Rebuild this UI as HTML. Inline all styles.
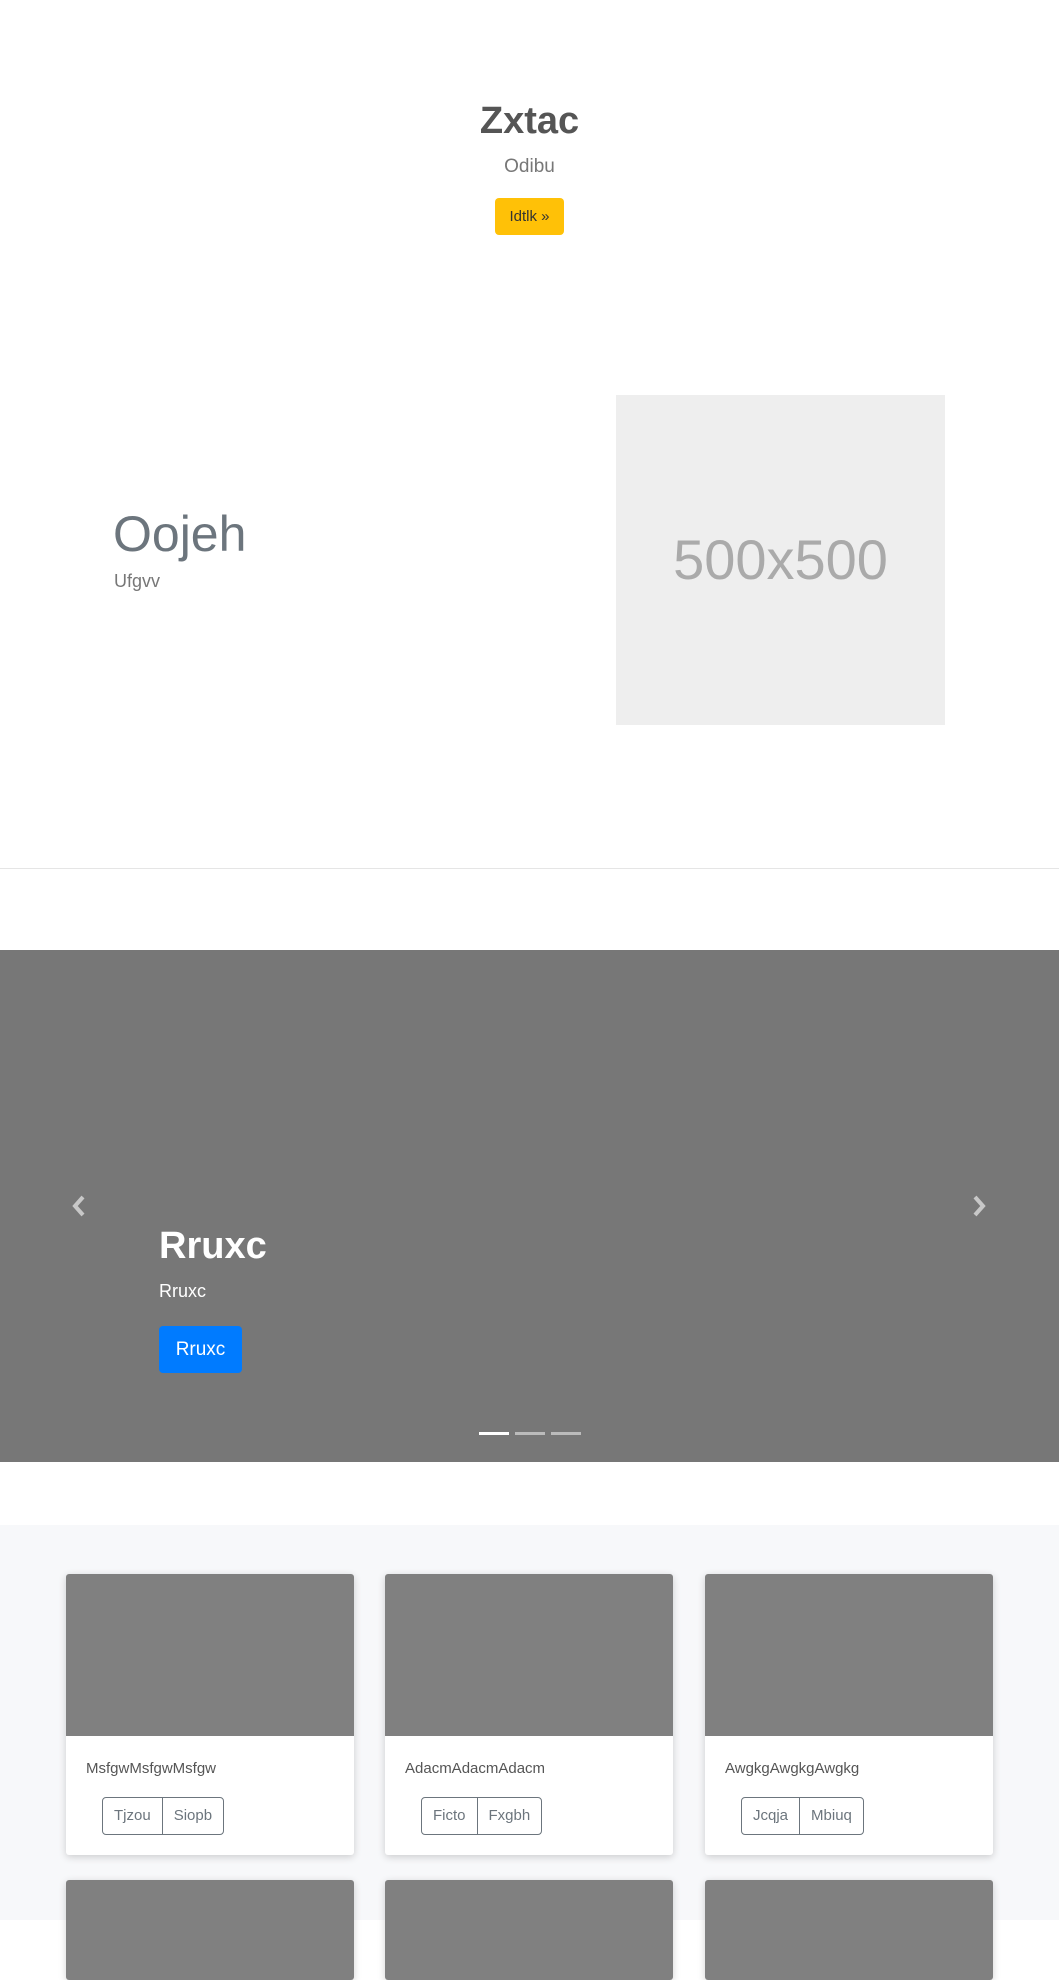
<!DOCTYPE html>
<html><head><meta charset="utf-8"><style>
*{margin:0;padding:0;box-sizing:border-box}
body{width:1059px;height:1920px;overflow:hidden;background:#fff;font-family:"Liberation Sans",sans-serif;position:relative}
.a{position:absolute}
.card{position:absolute;width:288px;background:#fff;box-shadow:0 2px 8px rgba(0,0,0,.18);border-radius:3px;overflow:hidden}
.card .img{height:162px;background:#808080}
.card .t{position:absolute;left:20px;top:186px;font-size:15px;color:#555}
.bg{position:absolute;left:36px;top:223px;height:38px;border:1px solid #6c757d;border-radius:4px;display:flex;font-size:15px;color:#6c757d}
.bg span{padding:0 11px;line-height:36px}
.bg span+span{border-left:1px solid #6c757d}
</style></head><body>
<div class="a" style="left:0;width:1059px;top:100px;text-align:center;font-size:38px;font-weight:bold;color:#555">Zxtac</div>
<div class="a" style="left:0;width:1059px;top:156px;text-align:center;font-size:19px;color:#777">Odibu</div>
<div class="a" style="left:495px;top:198px;width:69px;height:37px;background:#ffc107;border-radius:4px;font-size:15px;color:#333;text-align:center;line-height:37px">Idtlk »</div>
<div class="a" style="left:113px;top:505px;font-size:50px;color:#6c757d">Oojeh</div>
<div class="a" style="left:114px;top:571px;font-size:18px;color:#777">Ufgvv</div>
<div class="a" style="left:616px;top:395px;width:329px;height:330px;background:#eee;color:#aaa;font-size:56px;text-align:center;line-height:330px">500x500</div>
<div class="a" style="left:0;top:868px;width:1059px;height:1px;background:#e5e5e5"></div>
<div class="a" style="left:0;top:950px;width:1059px;height:512px;background:#777">
<svg class="a" style="left:70px;top:245px" width="18" height="22" viewBox="0 0 18 22"><path d="M13 2 L5 11 L13 20" stroke="#c8c8c8" stroke-width="4" fill="none"/></svg>
<svg class="a" style="left:970px;top:245px" width="18" height="22" viewBox="0 0 18 22"><path d="M5 2 L13 11 L5 20" stroke="#c8c8c8" stroke-width="4" fill="none"/></svg>
<div class="a" style="left:159px;top:275px;font-size:38px;font-weight:bold;color:#fff">Rruxc</div>
<div class="a" style="left:159px;top:331px;font-size:18px;color:#fff">Rruxc</div>
<div class="a" style="left:159px;top:376px;width:83px;height:47px;background:#007bff;border-radius:4px;color:#fff;font-size:19px;text-align:center;line-height:47px">Rruxc</div>
<div class="a" style="left:479px;top:482px;width:30px;height:3px;background:#fff"></div>
<div class="a" style="left:515px;top:482px;width:30px;height:3px;background:#bbb"></div>
<div class="a" style="left:551px;top:482px;width:30px;height:3px;background:#bbb"></div>
</div>
<div class="a" style="left:0;top:1525px;width:1059px;height:395px;background:#f7f8fa"></div>
<div class="card" style="left:66px;top:1574px;height:281px"><div class="img"></div><div class="t">MsfgwMsfgwMsfgw</div><div class="bg"><span>Tjzou</span><span>Siopb</span></div></div>
<div class="card" style="left:385px;top:1574px;height:281px"><div class="img"></div><div class="t">AdacmAdacmAdacm</div><div class="bg"><span>Ficto</span><span>Fxgbh</span></div></div>
<div class="card" style="left:705px;top:1574px;height:281px"><div class="img"></div><div class="t">AwgkgAwgkgAwgkg</div><div class="bg"><span>Jcqja</span><span>Mbiuq</span></div></div>
<div class="card" style="left:66px;top:1880px;height:100px"><div class="img"></div></div>
<div class="card" style="left:385px;top:1880px;height:100px"><div class="img"></div></div>
<div class="card" style="left:705px;top:1880px;height:100px"><div class="img"></div></div>
</body></html>
